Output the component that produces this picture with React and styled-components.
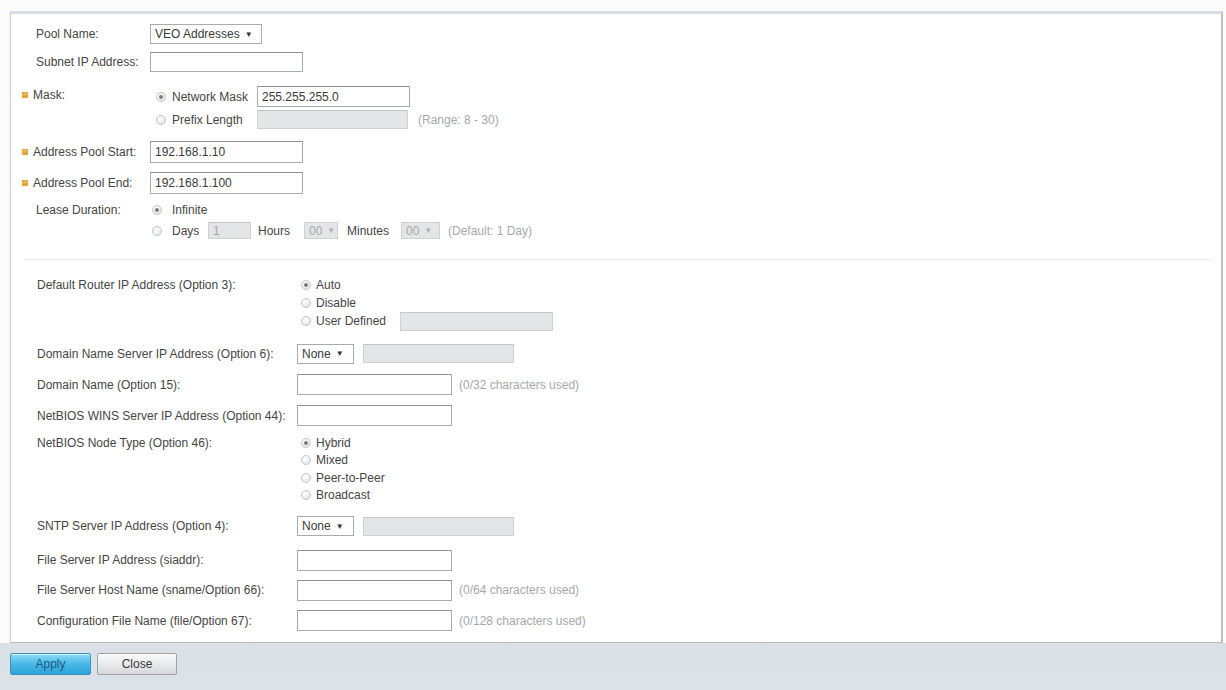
import React from "react";
import styled, { createGlobalStyle } from "styled-components";

const GlobalStyle = createGlobalStyle`
  html, body { margin: 0; padding: 0; background: #fbfbfb; }
  body {
    font-family: "Liberation Sans", Arial, sans-serif;
    font-size: 12px;
    color: #454545;
  }
`;

const Page = styled.div`
  width: 1226px;
  height: 690px;
  display: flex;
  flex-direction: column;
  overflow: hidden;
`;

const PanelWrap = styled.div`
  padding: 11px 3px 0 10px;
  background: #fbfbfb;
`;

const Panel = styled.div`
  background: #fff;
  border-left: 1px solid #c9ccce;
  border-right: 2px solid #bdbfc1;
  border-bottom: 1px solid #b9bcbf;
  border-top: 3px solid #d5dde3;
  padding-bottom: 6px;
`;

const Section = styled.div`
  padding-left: ${(p) => p.pl}px;
  display: flex;
  flex-direction: column;
`;

const Row = styled.div`
  display: flex;
  align-items: ${(p) => (p.top ? "flex-start" : "center")};
  height: ${(p) => (p.h ? `${p.h}px` : "auto")};
  margin-top: ${(p) => p.mt || 0}px;
`;

const Label = styled.div`
  width: ${(p) => p.w}px;
  flex-shrink: 0;
  display: flex;
  align-items: center;
  height: ${(p) => (p.h ? `${p.h}px` : "auto")};
  padding-left: ${(p) => p.pl || 0}px;
  box-sizing: border-box;
  white-space: nowrap;
`;

const ReqMark = styled.span`
  width: 6px;
  height: 6px;
  margin-right: 5px;
  background: linear-gradient(#f7c35a, #e8951c);
  border: 1px solid #e4a640;
  box-sizing: border-box;
`;

const Stack = styled.div`
  display: flex;
  flex-direction: column;
`;

const Line = styled.div`
  display: flex;
  align-items: center;
  height: ${(p) => p.h}px;
`;

const Radio = styled.span`
  width: 10px;
  height: 10px;
  border-radius: 50%;
  box-sizing: border-box;
  border: 1px solid #c3c6c8;
  background: radial-gradient(circle at 40% 35%, #ffffff, #dcdfe1);
  display: inline-flex;
  align-items: center;
  justify-content: center;
  flex-shrink: 0;
  margin-left: ${(p) => p.ml || 0}px;
  margin-right: ${(p) => p.mr || 6}px;
  &::after {
    content: "";
    width: 4px;
    height: 4px;
    border-radius: 50%;
    background: ${(p) => (p.checked ? "#7a7d80" : "transparent")};
  }
`;

const Text = styled.span`
  white-space: nowrap;
  width: ${(p) => (p.w ? `${p.w}px` : "auto")};
  margin-left: ${(p) => p.ml || 0}px;
  color: ${(p) => (p.muted ? "#a5a8ab" : "#454545")};
  flex-shrink: 0;
`;

const Input = styled.div`
  width: ${(p) => p.w}px;
  height: ${(p) => p.h || 20}px;
  margin-left: ${(p) => p.ml || 0}px;
  box-sizing: border-box;
  border: 1px solid ${(p) => (p.disabled ? "#cfd1d3" : "#a9acaf")};
  border-top-color: ${(p) => (p.disabled ? "#c4c6c8" : "#8f9295")};
  background: ${(p) => (p.disabled ? "#e4e5e6" : "#fff")};
  color: ${(p) => (p.disabled ? "#a8a8a8" : "#3a3a3a")};
  display: flex;
  align-items: center;
  padding-left: 4px;
  flex-shrink: 0;
  white-space: nowrap;
`;

const Select = styled.div`
  width: ${(p) => p.w}px;
  height: ${(p) => p.h || 20}px;
  margin-left: ${(p) => p.ml || 0}px;
  box-sizing: border-box;
  border: 1px solid ${(p) => (p.disabled ? "#cfd1d3" : "#a9acaf")};
  background: ${(p) => (p.disabled ? "#e4e5e6" : "#fff")};
  color: ${(p) => (p.disabled ? "#a8a8a8" : "#3a3a3a")};
  display: flex;
  align-items: center;
  padding-left: 4px;
  flex-shrink: 0;
  white-space: nowrap;
  &::after {
    content: "▼";
    font-size: 8px;
    margin-left: 5px;
    color: ${(p) => (p.disabled ? "#b0b0b0" : "#333")};
  }
`;

const Separator = styled.div`
  height: 1px;
  background: #e0e2e4;
  margin: ${(p) => p.mt}px 10px 0 13px;
`;

const Footer = styled.div`
  flex: 1;
  background: linear-gradient(#d9e0e6, #dbe2e8);
  display: flex;
  align-items: flex-start;
  gap: 6px;
  padding: 10px 0 0 10px;
`;

const Button = styled.button`
  width: ${(p) => p.w}px;
  height: 22px;
  font-family: "Liberation Sans", Arial, sans-serif;
  font-size: 12px;
  border-radius: 2px;
  padding: 0;
  cursor: pointer;
  border: 1px solid ${(p) => (p.primary ? "#3c8fbf" : "#9ea2a6")};
  color: ${(p) => (p.primary ? "#1e5a86" : "#3a3a3a")};
  background: ${(p) =>
    p.primary
      ? "linear-gradient(#8fdcf6, #47b8e6 50%, #2ea3d8)"
      : "linear-gradient(#fafafa, #e9eaeb 50%, #d6d8da)"};
  box-shadow: inset 0 1px 0 rgba(255, 255, 255, 0.6);
`;

const TopLabel = ({ req, children, h }) => (
  <Label w={128} h={h} pl={req ? 0 : 14}>
    {req && <ReqMark />}
    {children}
  </Label>
);

const BLabel = ({ children, h }) => (
  <Label w={260} h={h}>
    {children}
  </Label>
);

export default function App() {
  return (
    <Page>
      <GlobalStyle />
      <PanelWrap>
        <Panel>
          <Section pl={11}>
            <Row h={28} mt={6}>
              <TopLabel>Pool Name:</TopLabel>
              <Select w={112}>VEO Addresses</Select>
            </Row>
            <Row h={28}>
              <TopLabel>Subnet IP Address:</TopLabel>
              <Input w={153} />
            </Row>
            <Row top mt={9}>
              <TopLabel req h={20}>Mask:</TopLabel>
              <Stack>
                <Line h={23}>
                  <Radio checked ml={6} />
                  <Text w={85}>Network Mask</Text>
                  <Input w={153} h={21}>255.255.255.0</Input>
                </Line>
                <Line h={23}>
                  <Radio ml={6} />
                  <Text w={85}>Prefix Length</Text>
                  <Input w={151} h={19} disabled />
                  <Text muted ml={10}>(Range: 8 - 30)</Text>
                </Line>
              </Stack>
            </Row>
            <Row h={24} mt={9}>
              <TopLabel req>Address Pool Start:</TopLabel>
              <Input w={153} h={22}>192.168.1.10</Input>
            </Row>
            <Row h={24} mt={7}>
              <TopLabel req>Address Pool End:</TopLabel>
              <Input w={153} h={22}>192.168.1.100</Input>
            </Row>
            <Row top mt={4}>
              <TopLabel h={21}>Lease Duration:</TopLabel>
              <Stack>
                <Line h={21}>
                  <Radio checked ml={2} mr={10} />
                  <Text>Infinite</Text>
                </Line>
                <Line h={21}>
                  <Radio ml={2} mr={10} />
                  <Text w={36}>Days</Text>
                  <Input w={43} h={17} disabled>1</Input>
                  <Text ml={7} w={46}>Hours</Text>
                  <Select w={34} h={17} disabled>00</Select>
                  <Text ml={9} w={54}>Minutes</Text>
                  <Select w={39} h={17} disabled>00</Select>
                  <Text muted ml={8}>(Default: 1 Day)</Text>
                </Line>
              </Stack>
            </Row>
          </Section>
          <Separator mt={18} />
          <Section pl={26}>
            <Row top mt={16}>
              <BLabel h={18}>Default Router IP Address (Option 3):</BLabel>
              <Stack>
                <Line h={18}>
                  <Radio checked ml={4} mr={5} />
                  <Text>Auto</Text>
                </Line>
                <Line h={18}>
                  <Radio ml={4} mr={5} />
                  <Text>Disable</Text>
                </Line>
                <Line h={18}>
                  <Radio ml={4} mr={5} />
                  <Text w={84}>User Defined</Text>
                  <Input w={153} h={19} disabled />
                </Line>
              </Stack>
            </Row>
            <Row h={31} mt={8}>
              <BLabel>Domain Name Server IP Address (Option 6):</BLabel>
              <Select w={57}>None</Select>
              <Input w={151} h={19} ml={9} disabled />
            </Row>
            <Row h={31}>
              <BLabel>Domain Name (Option 15):</BLabel>
              <Input w={155} h={21} />
              <Text muted ml={7}>(0/32 characters used)</Text>
            </Row>
            <Row h={31}>
              <BLabel>NetBIOS WINS Server IP Address (Option 44):</BLabel>
              <Input w={155} h={21} />
            </Row>
            <Row top mt={3}>
              <BLabel h={17.5}>NetBIOS Node Type (Option 46):</BLabel>
              <Stack>
                <Line h={17.5}>
                  <Radio checked ml={4} mr={5} />
                  <Text>Hybrid</Text>
                </Line>
                <Line h={17.5}>
                  <Radio ml={4} mr={5} />
                  <Text>Mixed</Text>
                </Line>
                <Line h={17.5}>
                  <Radio ml={4} mr={5} />
                  <Text>Peer-to-Peer</Text>
                </Line>
                <Line h={17.5}>
                  <Radio ml={4} mr={5} />
                  <Text>Broadcast</Text>
                </Line>
              </Stack>
            </Row>
            <Row h={32} mt={6}>
              <BLabel>SNTP Server IP Address (Option 4):</BLabel>
              <Select w={57}>None</Select>
              <Input w={151} h={19} ml={9} disabled />
            </Row>
            <Row h={30} mt={3}>
              <BLabel>File Server IP Address (siaddr):</BLabel>
              <Input w={155} h={21} />
            </Row>
            <Row h={30}>
              <BLabel>File Server Host Name (sname/Option 66):</BLabel>
              <Input w={155} h={21} />
              <Text muted ml={7}>(0/64 characters used)</Text>
            </Row>
            <Row h={31}>
              <BLabel>Configuration File Name (file/Option 67):</BLabel>
              <Input w={155} h={21} />
              <Text muted ml={7}>(0/128 characters used)</Text>
            </Row>
          </Section>
        </Panel>
      </PanelWrap>
      <Footer>
        <Button primary w={81}>Apply</Button>
        <Button w={80}>Close</Button>
      </Footer>
    </Page>
  );
}
